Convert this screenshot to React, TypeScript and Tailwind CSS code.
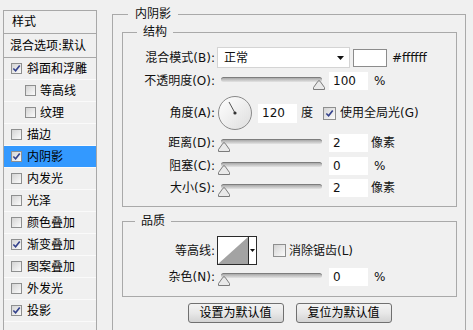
import React from 'react';

type StyleItem = { name: string; checked?: boolean; sub?: boolean; active?: boolean };

const styleItems: StyleItem[] = [
  { name: '斜面和浮雕', checked: true },
  { name: '等高线', sub: true },
  { name: '纹理', sub: true },
  { name: '描边' },
  { name: '内阴影', checked: true, active: true },
  { name: '内发光' },
  { name: '光泽' },
  { name: '颜色叠加' },
  { name: '渐变叠加', checked: true },
  { name: '图案叠加' },
  { name: '外发光' },
  { name: '投影', checked: true },
];

function CheckBox({ checked, className }: { checked?: boolean; className: string }) {
  return (
    <span
      className={`${className} shrink-0 flex items-center justify-center border border-[#8e8f8f] bg-linear-to-br from-[#d4d4d4] to-[#fbfbfb]`}
    >
      {checked && (
        <svg viewBox="0 0 10 10" className="w-[9px] h-[9px]">
          <path d="M1.5 5 L4 7.6 L8.6 1.6" fill="none" stroke="#34428c" strokeWidth="1.8" />
        </svg>
      )}
    </span>
  );
}

// thumb is placed over the groove
function Slider({ thumb }: { thumb: string }) {
  return (
    <div className="relative w-[112px] h-full shrink-0">
      <div className="absolute left-[4px] top-[7px] w-[101px] h-[5px] rounded-full border-t border-[#7d7d7d] bg-linear-to-b from-[#a9a9a9] to-[#e4e4e4]" />
      <svg viewBox="0 0 12 10" className={`absolute top-[10px] w-[12px] h-[10px] ${thumb}`}>
        <path d="M0.5 9.5 L0.5 7.5 L5 1.2 Q6 0 7 1.2 L11.5 7.5 L11.5 9.5 Z" fill="#e9e9e9" stroke="#7b7b7b" />
      </svg>
    </div>
  );
}

function NumBox({ value, className = 'w-[39px] h-[18px]' }: { value: string; className?: string }) {
  return (
    <input
      readOnly
      value={value}
      className={`${className} shrink-0 bg-white px-[4px] text-[12px] outline-none`}
    />
  );
}

function Label({ children }: { children: React.ReactNode }) {
  return <span className="w-[92px] shrink-0 text-right whitespace-nowrap">{children}</span>;
}

function SliderRow({ label, value, unit, thumb, className }: { label: string; value: string; unit: string; thumb: string; className: string }) {
  return (
    <div className={`flex items-center h-[22px] ${className}`}>
      <Label>{label}</Label>
      <span className="ml-[2px] h-full">
        <Slider thumb={thumb} />
      </span>
      <NumBox value={value} />
      <span className={unit === '%' ? 'ml-[6px]' : 'ml-[3px]'}>{unit}</span>
    </div>
  );
}

function Dial() {
  return (
    <div className="ml-[3px] w-[34px] h-[34px] rounded-full border border-[#8a8a8a] bg-linear-to-br from-white to-[#dedede] shrink-0">
      <svg viewBox="0 0 32 32" className="w-[32px] h-[32px]">
        <line x1="16" y1="16" x2="10" y2="5" stroke="#555" strokeWidth="1" />
        <circle cx="16" cy="16" r="1.6" fill="#333" />
      </svg>
    </div>
  );
}

export default function App() {
  return (
    <div className="w-[473px] h-[330px] overflow-hidden bg-[#f0f0f0] flex text-[12px] leading-4 text-black font-['DejaVu_Sans','Noto_Sans_CJK_SC',sans-serif]">
      {/* style list */}
      <aside className="ml-[3px] mt-[10px] w-[94px] h-[330px] shrink-0 border-x border-t border-[#a8a8a8]">
        <div className="h-[23px] border-b border-[#a8a8a8] flex items-center pl-[8px]">样式</div>
        <div className="h-[24px] border-b border-[#a8a8a8] flex items-center pl-[6px] whitespace-nowrap">混合选项:默认</div>
        {styleItems.map((s) => (
          <div
            key={s.name}
            className={`h-[22px] flex items-center border-b border-[#fafafa] ${s.active ? 'bg-[#3399ff]' : ''} ${s.sub ? 'pl-[21px] gap-[4px]' : 'pl-[7px] gap-[5px]'}`}
          >
            <CheckBox checked={s.checked} className="w-[11px] h-[11px]" />
            <span className="whitespace-nowrap">{s.name}</span>
          </div>
        ))}
      </aside>

      <fieldset className="ml-[15px] mt-[6px] w-[354px] h-[340px] shrink-0 min-w-0 border border-[#a9a9a9] pl-[9px] pr-[8px] pt-[2px] text-[#111]">
        <legend className="ml-[6px] px-[7px] leading-4">内阴影</legend>

        <fieldset className="min-w-0 border border-[#a9a9a9] pt-[7px] pb-[7px]">
          <legend className="ml-[14px] px-[6px] leading-4">结构</legend>

          <div className="flex items-center h-[21px]">
            <Label>混合模式(B):</Label>
            <div className="ml-[2px] w-[133px] h-[21px] bg-white border border-[#d4d4d4] flex items-center justify-between pl-[6px] pr-[5px]">
              <span>正常</span>
              <svg viewBox="0 0 7 4" className="w-[7px] h-[4px]">
                <path d="M0 0 H7 L3.5 4 Z" fill="#111" />
              </svg>
            </div>
            <div className="ml-[3px] w-[34px] h-[18px] bg-white border border-[#8c8c8c]" />
            <span className="ml-[5px]">#ffffff</span>
          </div>

          <SliderRow label="不透明度(O):" value="100" unit="%" thumb="left-[96px]" className="mt-[2px]" />

          <div className="flex items-center h-[34px] mt-[4px]">
            <Label>角度(A):</Label>
            <Dial />
            <NumBox value="120" className="ml-[6px] w-[39px] h-[19px]" />
            <span className="ml-[4px]">度</span>
            <CheckBox checked className="ml-[10px] w-[13px] h-[13px]" />
            <span className="ml-[4px]">使用全局光(G)</span>
          </div>

          <SliderRow label="距离(D):" value="2" unit="像素" thumb="left-[1px]" className="mt-[2px]" />
          <SliderRow label="阻塞(C):" value="0" unit="%" thumb="left-[1px]" className="mt-[1px]" />
          <SliderRow label="大小(S):" value="2" unit="像素" thumb="left-[1px]" className="" />
        </fieldset>

        <fieldset className="mt-[6px] min-w-0 border border-[#a9a9a9] pt-[7px] pb-[8px]">
          <legend className="ml-[12px] px-[6px] leading-4">品质</legend>

          <div className="flex items-center h-[29px]">
            <Label>等高线:</Label>
            <div className="ml-[2px] w-[40px] h-[29px] border border-[#2b2b2b] bg-white flex shrink-0">
              <svg viewBox="0 0 30 27" className="w-[30px] h-[27px]">
                <path d="M0 27 L30 0 L30 27 Z" fill="#a3a3a3" />
              </svg>
              <div className="flex-1 border-l border-[#2b2b2b] flex items-center justify-center">
                <svg viewBox="0 0 5 3" className="w-[5px] h-[3px]">
                  <path d="M0 0 H5 L2.5 3 Z" fill="#111" />
                </svg>
              </div>
            </div>
            <CheckBox className="ml-[16px] w-[13px] h-[13px]" />
            <span className="ml-[3px]">消除锯齿(L)</span>
          </div>

          <SliderRow label="杂色(N):" value="0" unit="%" thumb="left-[1px]" className="mt-[1px]" />
        </fieldset>

        <div className="mt-[6px] flex justify-center gap-[12px]">
          <button className="w-[96px] h-[20px] rounded-[3px] border border-[#707070] bg-linear-to-b from-[#f3f3f3] via-[#e8e8e8] to-[#d3d3d3] text-[12px] text-black">
            设置为默认值
          </button>
          <button className="w-[96px] h-[20px] rounded-[3px] border border-[#707070] bg-linear-to-b from-[#f3f3f3] via-[#e8e8e8] to-[#d3d3d3] text-[12px] text-black">
            复位为默认值
          </button>
        </div>
      </fieldset>
    </div>
  );
}
